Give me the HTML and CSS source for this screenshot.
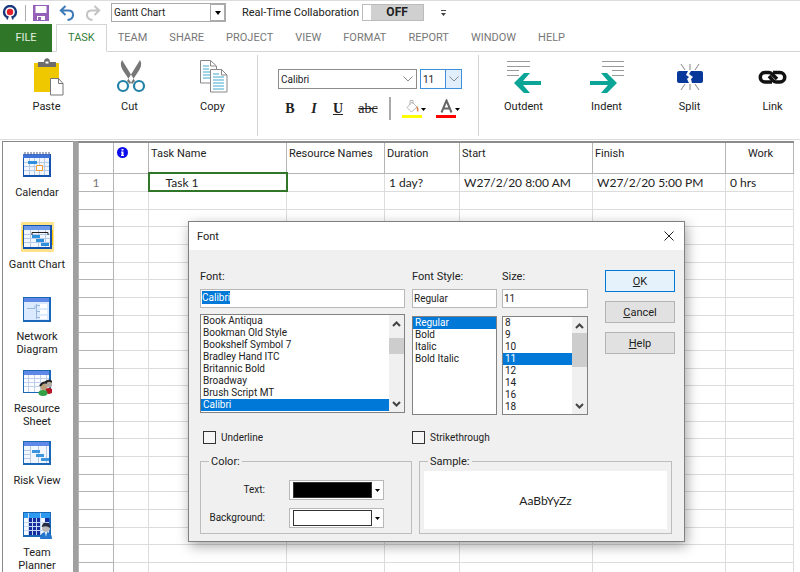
FILE: index.html
```html
<!DOCTYPE html>
<html lang="en">
<head>
    <meta charset="UTF-8">
    <meta name="viewport" content="width=device-width, initial-scale=1.0">
    <title>Gantt Chart</title>
    <link rel="stylesheet" href="styles.css">
</head>
<body>
    <header class="quickbar">
        <svg class="logo" width="16" height="16" viewBox="0 0 16 16">
            <circle cx="8" cy="7" r="6" fill="#fff" stroke="#17387c" stroke-width="2.4"/>
            <path d="M5.6 16 L7 9 H9 L10.4 16 Z" fill="#fff"/>
            <path d="M5 14.5 L6 11 M11 14.5 L10 11" stroke="#17387c" stroke-width="1.4"/>
            <circle cx="8" cy="7" r="3.2" fill="#e0212b"/>
        </svg>
        <span class="bar-line"></span>
        <button class="tool" aria-label="Save">
            <svg width="16" height="16" viewBox="0 0 16 16">
                <path d="M0 0h16v16H0z" fill="#9460b8"/>
                <path d="M2.5 1h11v7h-11zM4 11h8v4H4z" fill="#fff"/>
                <path d="M5 12h3v3H5z" fill="#9460b8"/>
            </svg>
        </button>
        <button class="tool" aria-label="Undo">
            <svg width="16" height="16" viewBox="0 0 16 16" fill="none" stroke="#3d7ab8" stroke-width="2">
                <path d="M6.5 1 L1.8 5.5 L6.5 10 M2 5.5 H9.5 C15 5.5 15.500 12 11 14.500 L8.500 15"/>
            </svg>
        </button>
        <button class="tool" aria-label="Redo">
            <svg width="16" height="16" viewBox="0 0 16 16" fill="none" stroke="#c4c4c4" stroke-width="2">
                <path d="M9.5 1 L14.200 5.500 L9.500 10 M14 5.500 H6.500 C1 5.500 .5 12 5 14.500 L7.500 15"/>
            </svg>
        </button>
        <div class="combo view-combo">
            <select aria-label="View"><option>Gantt Chart</option></select>
            <span class="arrow-box"><svg width="6" height="4" viewBox="0 0 6 4"><path d="M0 0h6L3 4z"/></svg></span>
        </div>
        <span class="collab" id="collab">Real-Time Collaboration</span>
        <button class="toggle" aria-labelledby="collab"><span>OFF</span></button>
        <button class="tool more" aria-label="More">
            <svg width="5" height="6" viewBox="0 0 5 6"><path d="M0 0h5v1H0zM0 3h5L2.500 6z" fill="#444"/></svg>
        </button>
    </header>

    <nav class="tabs">
        <a class="tab file" href="#">FILE</a>
        <a class="tab active" href="#">TASK</a>
        <a class="tab" href="#">TEAM</a>
        <a class="tab" href="#">SHARE</a>
        <a class="tab" href="#">PROJECT</a>
        <a class="tab" href="#">VIEW</a>
        <a class="tab" href="#">FORMAT</a>
        <a class="tab" href="#">REPORT</a>
        <a class="tab" href="#">WINDOW</a>
        <a class="tab" href="#">HELP</a>
    </nav>

    <section class="ribbon">
        <div class="group">
            <button class="big">
                <svg width="34" height="38" viewBox="0 0 34 38">
                    <path d="M4 5h25v29H4z" fill="#efc800"/>
                    <path d="M8 9V4h6c0-5 6-5 6 0h6v5z" fill="#6d6d6d"/>
                    <path d="M15.500 3.500h3v2h-3z" fill="#fff"/>
                    <path d="M20.500 20.500h8l4.500 5v11.500h-12.500z" fill="#fff" stroke="#777"/>
                    <path d="M28.500 20.500v5H33" fill="none" stroke="#777"/>
                </svg>
                Paste
            </button>
            <button class="big">
                <svg width="34" height="38" viewBox="0 0 34 38">
                    <path d="M9 2 Q6 7 11 14 L19 26 L22 23 Z M27 2 Q30 7 25 14 L17 26 L14 23 Z" fill="#777"/>
                    <circle cx="10" cy="28" r="5" fill="#fff" stroke="#2180a8" stroke-width="2.200"/>
                    <circle cx="26" cy="28" r="5" fill="#fff" stroke="#2180a8" stroke-width="2.200"/>
                </svg>
                Cut
            </button>
            <button class="big">
                <svg width="34" height="38" viewBox="0 0 34 38" fill="none" stroke="#888">
                    <path d="M4.500 2.500h10l6 5.500v17H4.500z" fill="#fff"/>
                    <path d="M14.500 2.500v5.500H20"/>
                    <path d="M7 8h6M7 11h6M7 14h7M7 17h7M7 20h7" stroke="#45a8cf"/>
                    <path d="M14.500 11.500h11l5.500 5.500v17H14.500z" fill="#fff"/>
                    <path d="M25.500 11.500v5.500H31"/>
                    <path d="M17 16h6M17 19h11M17 22h11M17 25h11M17 28h11M17 31h11" stroke="#45a8cf"/>
                </svg>
                Copy
            </button>
        </div>
        <div class="group font-group">
            <div class="row">
                <div class="combo name-combo">
                    <select aria-label="Font"><option>Calibri</option></select>
                    <span class="chevron-box"><svg width="10" height="6" viewBox="0 0 10 6"><path d="M.5 .5 L5 5 L9.500 .5"/></svg></span>
                </div>
                <div class="combo size-combo">
                    <select aria-label="Font size"><option>11</option></select>
                    <span class="chevron-box"><svg width="10" height="6" viewBox="0 0 10 6"><path d="M.5 .5 L5 5 L9.500 .5"/></svg></span>
                </div>
            </div>
            <div class="row format">
                <button class="fmt">B</button>
                <button class="fmt"><i>I</i></button>
                <button class="fmt"><u>U</u></button>
                <button class="fmt strike"><s>abc</s></button>
                <span class="fmt-line"></span>
                <button class="color-btn" aria-label="Fill color">
                    <svg width="24" height="20" viewBox="0 0 24 20">
                        <path d="M10 3 L15 8 L9.500 13 L5 8.500 Z M8 6V1.500h3V5" fill="#fff" stroke="#b5b5b5"/>
                        <path d="M15 7q2.500 3 1 6q-2-2-1-6z" fill="#d9824a"/>
                        <path d="M0 16h20v3H0z" fill="#ff0"/>
                        <path d="M19 9h5l-2.500 3z"/>
                    </svg>
                </button>
                <button class="color-btn" aria-label="Text color">
                    <svg width="24" height="20" viewBox="0 0 24 20">
                        <path d="M5.500 13.500 L10.500 1.500 L15.500 13.500 M7.500 9.500 H13.500" fill="none" stroke="#666" stroke-width="2"/>
                        <path d="M0 16h20v3H0z" fill="red"/>
                        <path d="M19 9h5l-2.500 3z"/>
                    </svg>
                </button>
            </div>
        </div>
        <div class="group indent-group">
            <button class="big">
                <svg width="34" height="38" viewBox="0 0 34 38">
                    <path d="M0 3.500h23M0 8.500h23M0 12.500h12M0 17.500h12" stroke="#999"/>
                    <path d="M7 25 L17 15 H23 L16 23 H34 V27 H16 L23 35 H17 Z" fill="#0aa596"/>
                </svg>
                Outdent
            </button>
            <button class="big">
                <svg width="34" height="38" viewBox="0 0 34 38">
                    <path d="M12 3.500h22M12 8.500h22M22 12.500h12M22 17.500h12" stroke="#999"/>
                    <path d="M27 25 L17 15 H11 L18 23 H0 V27 H18 L11 35 H17 Z" fill="#0aa596"/>
                </svg>
                Indent
            </button>
            <button class="big">
                <svg width="34" height="38" viewBox="0 0 34 38">
                    <path d="M8 6l4 6M17 6v6M26 6l-4 6M8 32l4-6M17 32v-6M26 32l-4-6" stroke="#888"/>
                    <path d="M6 13h9l-2 4 3 2-2 2 2 4H6q-2 0-2-2v-8q0-2 2-2zM18 13h10q2 0 2 2v8q0 2-2 2h-9l-1-4 2-2-4-3z" fill="#083899"/>
                </svg>
                Split
            </button>
            <button class="big">
                <svg width="34" height="38" viewBox="0 0 34 38" fill="none" stroke="#111" stroke-width="3.500">
                    <path d="M16 24 H9 a4.700 4.700 0 0 1 0 -9.500 h4 q2 0 3.500 2 L21 21"/>
                    <path d="M17 14.500 H24 a4.700 4.700 0 0 1 0 9.500 h-4 q-2 0 -3.500 -2 L13 18"/>
                </svg>
                Link
            </button>
        </div>
    </section>

    <main class="work">
        <aside class="views">
            <button class="view">
                <svg width="30" height="30" viewBox="0 0 30 30">
                    <path d="M1 4h28v23H1z" fill="#1552ae"/>
                    <path d="M1 4h27v4H1z" fill="#3e72d8"/>
                    <path d="M2 8h25v17H2z" fill="#f2f7ff"/>
                    <path d="M3 5v-3M6 5v-3M9 5v-3M12 5v-3M15 5v-3M18 5v-3M21 5v-3M24 5v-3M27 5v-3" stroke="#4b5c80"/>
                    <path d="M2 12.500h25M2 16.500h25M2 20.500h25M7.500 8v17M12.500 8v17M17.500 8v17M22.500 8v17" stroke="#b7cae6"/>
                    <path d="M6 11h9v3H6z" fill="#2e8fdc"/>
                    <path d="M14.500 15.500h6v5h-6z" fill="#fff" stroke="#f09a31"/>
                </svg>
                Calendar
            </button>
            <button class="view">
                <svg class="current" width="33" height="30" viewBox="0 0 33 30">
                    <path d="M1 8h31v15H1z" fill="#ffc400"/>
                    <path d="M2 3h29v24H2z" fill="#1552ae"/>
                    <path d="M3 4h26v4H3z" fill="#6d9bea"/>
                    <path d="M3 8h26v17H3z" fill="#f2f7ff"/>
                    <path d="M3 12.500h26M3 16.500h26M3 20.500h26M9.500 8v17M17.500 8v17M24.500 8v17" stroke="#b7cae6"/>
                    <path d="M11 13V10.500h16V13" fill="none" stroke="#222"/>
                    <path d="M11 13h8v3h-8zM15 17h8v3h-8zM20 21h8v3h-8z" fill="#2e8fdc"/>
                </svg>
                Gantt Chart
            </button>
            <button class="view">
                <svg width="30" height="30" viewBox="0 0 30 30">
                    <path d="M1 3h28v25H1z" fill="#1a67b8"/>
                    <path d="M2 4h25v4H2z" fill="#6088e6"/>
                    <path d="M2 8h25v18H2z" fill="#dbeaff"/>
                    <path d="M5 14.500h8v-3M14.500 10v15M14.500 11.500h4M14.500 17.500h4M14.500 23.500h4" fill="none" stroke="#98b7df"/>
                    <path d="M18 10h7v4h-7zM18 16h7v4h-7zM18 22h7v3h-7z" fill="#fff"/>
                </svg>
                Network<br>Diagram
            </button>
            <button class="view">
                <svg width="30" height="30" viewBox="0 0 30 30">
                    <path d="M1 4h28v23H1z" fill="#1a67b8"/>
                    <path d="M2 5h25v4H2z" fill="#6088e6"/>
                    <path d="M2 9h25v17H2z" fill="#fafcff"/>
                    <path d="M2 12.500h25M2 16.500h25M2 20.500h25M6.500 9v17M12.500 9v17M18.500 9v17M24.500 9v17" stroke="#bfd0e8"/>
                    <circle cx="22" cy="21" r="3.500" fill="#bba27a"/>
                    <circle cx="27" cy="18" r="3.500" fill="#b4aba2"/>
                    <path d="M18 20q3-5 7-3M23 17q3-4 7-1" fill="none" stroke="#222" stroke-width="2"/>
                    <ellipse cx="27" cy="25" rx="3.500" ry="3" fill="#b51825"/>
                    <ellipse cx="21" cy="27" rx="4.500" ry="3" fill="#32a044"/>
                </svg>
                Resource<br>Sheet
            </button>
            <button class="view">
                <svg width="30" height="30" viewBox="0 0 30 30">
                    <path d="M1 3h28v24H1z" fill="#1a67b8"/>
                    <path d="M2 4h25v4H2z" fill="#6088e6"/>
                    <path d="M2 8h25v17H2z" fill="#f2f7ff"/>
                    <path d="M2 12.500h7M2 16.500h7M2 20.500h7M8.500 8v17M16.500 8v17M24.500 8v17" stroke="#b7cae6"/>
                    <path d="M10 12h8v3h-8zM14 16h8v3h-8zM19 20h8v3h-8z" fill="#3c95dd"/>
                </svg>
                Risk View
            </button>
            <button class="view">
                <svg width="30" height="30" viewBox="0 0 30 30">
                    <path d="M1 2h28v25H1z" fill="#1a67b8"/>
                    <path d="M2 3h26v5H2z" fill="#2d9af0"/>
                    <path d="M2 8h25v17H2z" fill="#f4faff"/>
                    <path d="M7 8h11v17H7zM23 8h4v7h-4z" fill="#152c9c"/>
                    <path d="M2 12.500h25M2 16.500h25M2 20.500h20M6.500 3v22M10.500 8v17M14.500 8v17M18.500 3v22" stroke="#c5d8f4"/>
                    <path d="M18 29q0-7 6-7t6 7z" fill="#2575cf"/>
                    <circle cx="24" cy="18" r="4" fill="#bcb9bb"/>
                    <path d="M20 17q0-5 5-4q4 1 3 5q-3-3-8-1z" fill="#272b3e"/>
                    <path d="M23 22l1 5 1-5z" fill="#fff"/>
                </svg>
                Team<br>Planner
            </button>
        </aside>

        <div class="sheet">
            <table class="grid">
                <colgroup>
                    <col class="c-id"><col class="c-info"><col class="c-name"><col class="c-res"><col class="c-dur"><col class="c-date"><col class="c-date"><col>
                </colgroup>
                <thead>
                    <tr>
                        <th></th>
                        <th class="info">
                            <svg width="11" height="11" viewBox="0 0 11 11"><circle cx="5.500" cy="5.500" r="5.500" fill="#0b0bee"/><path d="M4.500 2h2v1.500h-2zM4 4.500h2.500v3.500H7v1H4v-1h.5V5.500H4z" fill="#fff"/></svg>
                        </th>
                        <th>Task Name</th>
                        <th>Resource Names</th>
                        <th>Duration</th>
                        <th>Start</th>
                        <th>Finish</th>
                        <th class="center">Work</th>
                    </tr>
                </thead>
                <tbody>
                    <tr><td>1</td><td></td><td class="selected">Task 1</td><td></td><td>1 day?</td><td>W27/2/20 8:00 AM</td><td>W27/2/20 5:00 PM</td><td>0 hrs</td></tr>
                </tbody>
            </table>
        </div>
    </main>

    <div class="dialog" role="dialog" aria-labelledby="dialog-title">
        <div class="titlebar">
            <span id="dialog-title">Font</span>
            <button class="close" aria-label="Close">
                <svg width="10" height="10" viewBox="0 0 10 10"><path d="M.5 .5l9 9M9.500 .5l-9 9" stroke="#222"/></svg>
            </button>
        </div>
        <form class="dialog-body">
            <div class="top">
                <div class="field f-font">
                    <label for="font">Font:</label>
                    <div class="text-box"><input id="font" class="marked" type="text" value="Calibri"></div>
                    <div class="list">
                        <select size="8" aria-label="Fonts">
                            <option>Book Antiqua</option>
                            <option>Bookman Old Style</option>
                            <option>Bookshelf Symbol 7</option>
                            <option>Bradley Hand ITC</option>
                            <option>Britannic Bold</option>
                            <option>Broadway</option>
                            <option>Brush Script MT</option>
                            <option selected>Calibri</option>
                        </select>
                        <div class="scroll">
                            <svg width="9" height="6" viewBox="0 0 9 6"><path d="M1 5l3.500-3.500L8 5"/></svg>
                            <span class="thumb"></span>
                            <svg width="9" height="6" viewBox="0 0 9 6"><path d="M1 1l3.500 3.500L8 1"/></svg>
                        </div>
                    </div>
                </div>
                <div class="field f-style">
                    <label for="style">Font Style:</label>
                    <div class="text-box"><input id="style" type="text" value="Regular"></div>
                    <div class="list">
                        <select size="8" aria-label="Styles">
                            <option selected>Regular</option>
                            <option>Bold</option>
                            <option>Italic</option>
                            <option>Bold Italic</option>
                        </select>
                    </div>
                </div>
                <div class="field f-size">
                    <label for="size">Size:</label>
                    <div class="text-box"><input id="size" type="text" value="11"></div>
                    <div class="list">
                        <select size="8" aria-label="Sizes">
                            <option>8</option>
                            <option>9</option>
                            <option>10</option>
                            <option selected>11</option>
                            <option>12</option>
                            <option>14</option>
                            <option>16</option>
                            <option>18</option>
                        </select>
                        <div class="scroll">
                            <svg width="9" height="6" viewBox="0 0 9 6"><path d="M1 5l3.500-3.500L8 5"/></svg>
                            <span class="thumb"></span>
                            <svg width="9" height="6" viewBox="0 0 9 6"><path d="M1 1l3.500 3.500L8 1"/></svg>
                        </div>
                    </div>
                </div>
                <div class="actions">
                    <button type="button" class="ok"><u>O</u>K</button>
                    <button type="button"><u>C</u>ancel</button>
                    <button type="button"><u>H</u>elp</button>
                </div>
            </div>
            <div class="checks">
                <label><input type="checkbox">Underline</label>
                <label><input type="checkbox">Strikethrough</label>
            </div>
            <div class="bottom">
                <fieldset class="colors">
                    <legend>Color:</legend>
                    <label for="text-color">Text:</label>
                    <div class="swatch">
                        <select id="text-color" class="black"><option aria-label="Black"></option></select>
                        <svg width="5" height="3" viewBox="0 0 5 3"><path d="M0 0h5L2.500 3z"/></svg>
                    </div>
                    <label for="back-color">Background:</label>
                    <div class="swatch">
                        <select id="back-color"><option aria-label="White"></option></select>
                        <svg width="5" height="3" viewBox="0 0 5 3"><path d="M0 0h5L2.500 3z"/></svg>
                    </div>
                </fieldset>
                <fieldset class="sample">
                    <legend>Sample:</legend>
                    <div class="preview">AaBbYyZz</div>
                </fieldset>
            </div>
        </form>
    </div>

    <script>
        // fill the sheet with empty rows
        const body = document.querySelector(".grid tbody");
        for (let i = 0; i < 40; i++) {
            const row = body.insertRow();
            for (let j = 0; j < 8; j++) {
                row.insertCell();
            }
        }
    </script>
</body>
</html>
```
FILE: styles.css
```css
* {
    box-sizing: border-box;
}

body {
    margin: 0;
    height: 100vh;
    display: flex;
    flex-direction: column;
    overflow: hidden;
    position: relative;
    background-color: #fff;
    color: #222;
    font-family: Roboto, "Liberation Sans", sans-serif;
    font-size: 11px;
}

button,
input,
select {
    margin: 0;
    padding: 0;
    border: none;
    background: none;
    color: inherit;
    font: inherit;
}

select {
    appearance: none;
    outline: none;
    border-radius: 0;
}

/* quick access bar */
.quickbar {
    display: flex;
    align-items: center;
    flex: none;
    height: 24px;
    padding-left: 2px;
    border-top: 1px solid #ddd;
}

.logo {
    margin-right: 7px;
}

.bar-line {
    width: 1px;
    height: 16px;
    margin-right: 7px;
    background-color: #aaa;
}

.tool {
    display: flex;
    margin-right: 10px;
}

.combo {
    display: flex;
    background-color: #fff;
    border: 1px solid #8c8c8c;
}

.combo select {
    flex: 1;
    min-width: 0;
    padding-left: 2px;
    font-size: 10px;
}

.view-combo {
    width: 115px;
    height: 19px;
    border: 1px solid #aaa;
}

.arrow-box {
    display: flex;
    align-items: center;
    justify-content: center;
    width: 15px;
    border: 1px solid #aaa;
}

.collab {
    margin-left: 16px;
}

.toggle {
    display: flex;
    width: 62px;
    height: 17px;
    margin-left: 3px;
    padding-left: 8px;
    border: 1px solid #bbb;
}

.toggle span {
    flex: 1;
    height: 15px;
    line-height: 15px;
    background-color: #d0d0d0;
    font-size: 12px;
    font-weight: 700;
}

.more {
    margin-left: 17px;
}

/* ribbon tabs */
.tabs {
    display: flex;
    flex: none;
    height: 28px;
    border-bottom: 1px solid #d4d4d4;
}

.tab {
    height: 28px;
    line-height: 28px;
    padding: 0 11px;
    color: #777;
    text-decoration: none;
}

.file {
    width: 52px;
    margin-right: 4px;
    text-align: center;
    background-color: #2f7629;
    color: #e2f0e0;
}

.active {
    border: 1px solid #d4d4d4;
    border-bottom-color: #fff;
    background-color: #fff;
    color: #36803a;
    line-height: 26px;
}

/* ribbon */
.ribbon {
    display: flex;
    flex: none;
    height: 88px;
    padding: 3px 0 3px 5px;
    border-bottom: 1px solid #ddd;
    overflow: hidden;
}

.group {
    display: flex;
    flex: none;
}

.big {
    display: flex;
    flex-direction: column;
    align-items: center;
    gap: 4px;
    width: 83px;
    padding-top: 3px;
    line-height: 14px;
}

.font-group {
    flex-direction: column;
    gap: 8px;
    width: 222px;
    margin-left: 3px;
    padding: 14px 0 0 20px;
    border: 1px solid #d4d4d4;
    border-width: 0 1px;
}

.indent-group {
    margin-left: 3px;
}

.row {
    display: flex;
    gap: 3px;
}

.name-combo,
.size-combo {
    height: 20px;
}

.name-combo {
    width: 139px;
}

.size-combo {
    width: 42px;
    border-color: #3c8fd8;
}

.chevron-box {
    display: flex;
    align-items: center;
    justify-content: center;
    width: 16px;
}

.chevron-box path {
    fill: none;
    stroke: #888;
}

.size-combo .chevron-box {
    background-color: #e0effb;
    border-left: 1px solid #3c8fd8;
}

.format {
    align-items: center;
    gap: 0;
}

.fmt {
    width: 24px;
    font-family: "Liberation Serif", serif;
    font-size: 14px;
    font-weight: 700;
}

.strike {
    width: 36px;
    font-weight: 400;
}

.fmt-line {
    width: 2px;
    height: 23px;
    margin: 0 11px 0 3px;
    background-color: #aaa;
}

.color-btn {
    display: flex;
    margin-right: 10px;
}

/* views bar and sheet */
.work {
    display: flex;
    flex: 1;
    min-height: 0;
    padding: 1px 0 0 2px;
    overflow: hidden;
}

.views {
    flex: none;
    width: 71px;
    padding-top: 8px;
    border: 1px solid #888;
    border-width: 1px 0 0 1px;
}

.view {
    display: flex;
    flex-direction: column;
    align-items: center;
    gap: 6px;
    width: 68px;
    height: 72px;
    line-height: 13px;
    white-space: nowrap;
}

.current {
    background-color: #ffe28c;
}

.sheet {
    flex: 1;
    min-width: 0;
    padding-right: 6px;
    border-left: 5px solid #a0a0a0;
}

.grid {
    width: 100%;
    table-layout: fixed;
    border-collapse: collapse;
    border-top: 2px solid #8c8c8c;
}

.c-id { width: 35px; }
.c-info { width: 35px; }
.c-name { width: 138px; }
.c-res { width: 98px; }
.c-dur { width: 75px; }
.c-date { width: 133px; }

.grid th {
    height: 31px;
    padding: 4px 0 0 2px;
    vertical-align: top;
    text-align: left;
    border: 1px solid #b4b4b4;
    font-weight: 400;
    white-space: nowrap;
}

.grid .info {
    padding-left: 3px;
}

.grid .center {
    text-align: center;
}

.grid td {
    height: 18px;
    padding: 0 0 0 4px;
    border: 1px solid #dcdcdc;
    font-family: Lato, "Open Sans", sans-serif;
    font-size: 12px;
    line-height: 15px;
    white-space: nowrap;
}

.grid tr:nth-child(3n) td {
    height: 17px;
}

.grid td:first-child {
    padding: 0;
    text-align: center;
    color: #777;
    border-color: #b4b4b4;
}

.grid td.selected {
    padding-left: 16px;
    border: 2px solid #2f7629;
}

/* font dialog */
.dialog {
    position: absolute;
    left: 188px;
    top: 221px;
    width: 497px;
    border: 1px solid #808080;
    background-color: #f0f0f0;
    box-shadow: 2px 4px 12px rgba(0, 0, 0, 0.35);
}

.titlebar {
    display: flex;
    align-items: center;
    justify-content: space-between;
    height: 28px;
    padding: 0 10px 0 8px;
    background-color: #fff;
}

.close {
    display: flex;
}

.dialog-body {
    padding: 20px 12px 7px 11px;
}

.top {
    display: flex;
}

.field {
    display: flex;
    flex-direction: column;
}

.field label {
    height: 19px;
    line-height: 14px;
}

.f-font {
    width: 205px;
    margin-right: 7px;
}

.f-style {
    width: 85px;
    margin-right: 5px;
}

.f-size {
    width: 86px;
}

.text-box {
    display: flex;
    height: 19px;
    padding: 1px;
    border: 1px solid #b8b8b8;
    background-color: #fff;
    font-size: 10px;
}

.text-box input {
    width: 100%;
    outline: none;
}

.text-box .marked {
    width: auto;
    field-sizing: content;
    height: 13px;
    background-color: #0078d7;
    color: #fff;
}

.list {
    display: flex;
    height: 99px;
    margin-top: 8px;
    border: 1px solid #828282;
    background-color: #fff;
    font-size: 10px;
}

.f-font .list {
    margin-top: 6px;
}

.list select {
    flex: 1;
    min-width: 0;
    height: 97px;
    overflow: hidden;
}

.list option {
    height: 12px;
    min-height: 0;
    padding: 0 2px;
    line-height: 12px;
}

.list option:checked {
    background: linear-gradient(#0078d7, #0078d7);
    -webkit-text-fill-color: #fff;
}

.scroll {
    display: flex;
    flex-direction: column;
    align-items: center;
    width: 15px;
    padding: 6px 0 5px;
    background-color: #f0f0f0;
}

.scroll path {
    fill: none;
    stroke: #444;
    stroke-width: 2;
}

.thumb {
    width: 15px;
    height: 16px;
    margin: 11px 0 auto;
    background-color: #cdcdcd;
}

.f-size .thumb {
    height: 34px;
    margin-top: 4px;
}

.actions {
    display: flex;
    flex-direction: column;
    gap: 9px;
    width: 70px;
    margin-left: auto;
    margin-right: -3px;
}

.actions button {
    height: 22px;
    border: 1px solid #b4b4b4;
    background-color: #e1e1e1;
}

.actions .ok {
    border-color: #0078d7;
    background-color: #e5f1fb;
}

.checks {
    display: grid;
    grid-template-columns: 209px auto;
    margin: 16px 0 0 3px;
    font-size: 10px;
}

.checks label {
    display: flex;
    align-items: center;
    gap: 5px;
}

.checks input {
    appearance: none;
    width: 13px;
    height: 13px;
    border: 1px solid #333;
    background-color: #f6f6f6;
}

.bottom {
    display: flex;
    gap: 7px;
    margin-top: 11px;
}

fieldset {
    min-width: 0;
    height: 79px;
    margin: 0;
    padding: 0 4px 5px;
    border: 1px solid #bdbdbd;
}

legend {
    margin-left: 4px;
    padding: 0 2px;
    line-height: 13px;
}

.colors {
    display: grid;
    grid-template-columns: 60px 95px;
    gap: 8px 24px;
    align-content: end;
    width: 212px;
}

.colors label {
    font-size: 10px;
    line-height: 20px;
    text-align: right;
}

.swatch {
    display: flex;
    align-items: center;
    gap: 3px;
    height: 20px;
    padding: 1px 3px;
    border: 1px solid #b8b8b8;
    background-color: #fff;
}

.swatch select {
    flex: 1;
    height: 16px;
    border: 1px solid #333;
}

.swatch .black {
    background-color: #000;
}

.sample {
    flex: 1;
}

.preview {
    display: flex;
    align-items: center;
    justify-content: center;
    height: 58px;
    margin-top: 3px;
    background-color: #fff;
    font-family: Lato, "Open Sans", sans-serif;
    font-size: 12px;
}
```
